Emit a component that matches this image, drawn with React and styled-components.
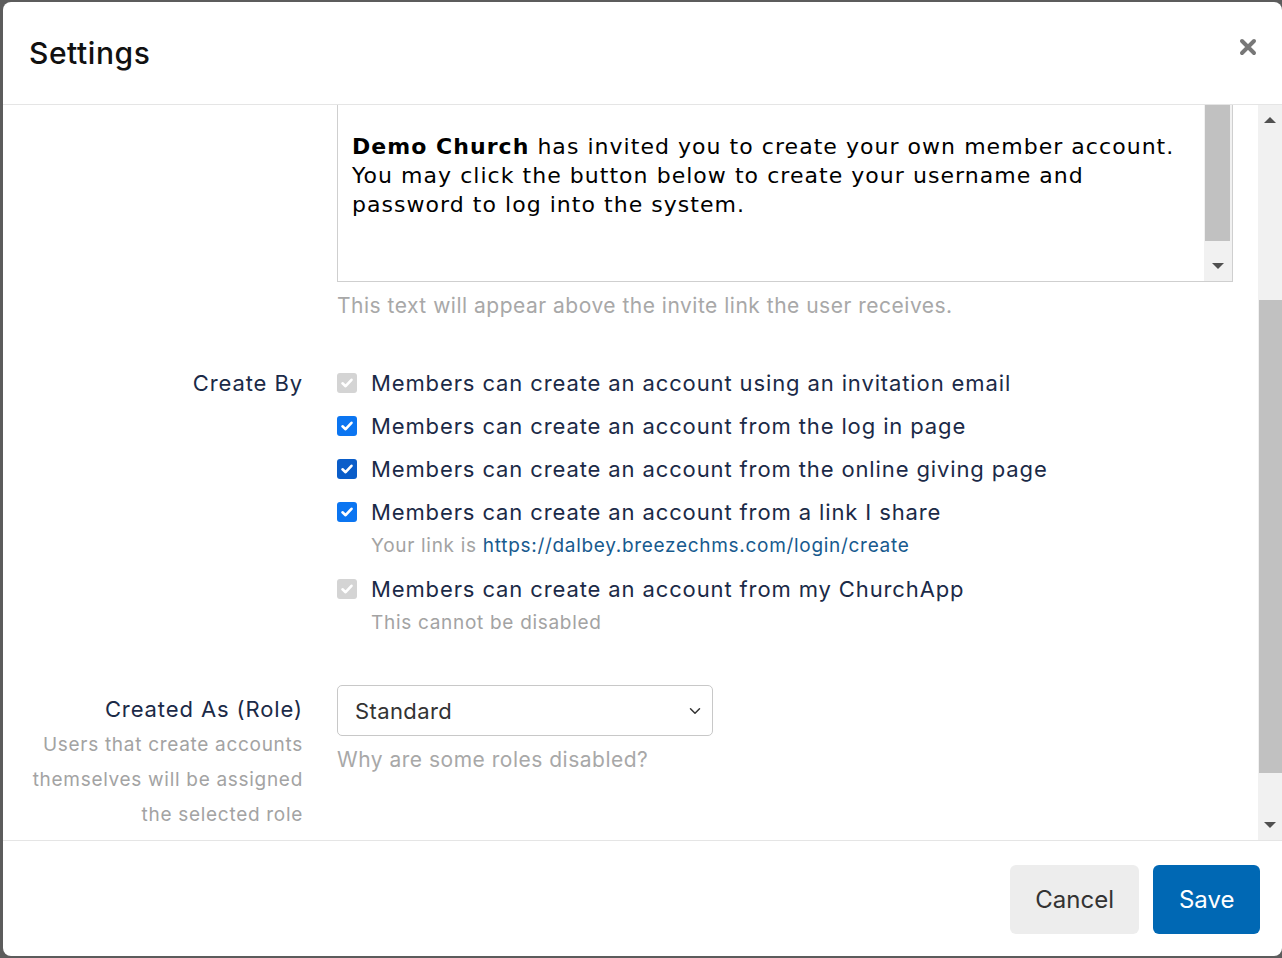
import React from "react";
import styled, { createGlobalStyle } from "styled-components";
import { ChevronDown } from "lucide-react";

const Global = createGlobalStyle`
  html, body { margin: 0; padding: 0; }
  body {
    background: #5c5c5c;
    width: 1282px;
    height: 958px;
    overflow: hidden;
    font-family: Inter, "Noto Sans", sans-serif;
  }
`;

const Page = styled.div`
  padding: 2px 0 0 3px;
`;

const Modal = styled.div`
  width: 1279px;
  height: 954px;
  background: #fff;
  border-radius: 8px;
  overflow: hidden;
  display: flex;
  flex-direction: column;
`;

const Header = styled.div`
  height: 102px;
  flex: none;
  display: flex;
  align-items: center;
  justify-content: space-between;
  padding: 0 25px 0 26px;
  border-bottom: 1px solid #e5e5e5;
`;

const Title = styled.h1`
  margin: 0;
  font-size: 30px;
  font-weight: 500;
  color: #111;
  letter-spacing: 0.55px;
`;

const Close = styled.button`
  align-self: flex-start;
  margin-top: 36px;
  width: 18px;
  height: 18px;
  padding: 0;
  border: 0;
  background: none;
  display: flex;
`;

const Body = styled.div`
  flex: 1;
  min-height: 0;
  display: flex;
`;

const Content = styled.div`
  flex: 1;
  min-width: 0;
  overflow: hidden;
  padding-right: 25px;
`;

const Track = styled.div`
  width: ${(p) => p.$w}px;
  flex: none;
  background: #f1f1f1;
  display: flex;
  flex-direction: column;
`;

const Thumb = styled.div`
  height: ${(p) => p.$h}px;
  margin: ${(p) => p.$m};
  background: #c1c1c1;
  flex: none;
`;

const Spacer = styled.div`
  flex: ${(p) => (p.$h ? "none" : "1")};
  height: ${(p) => (p.$h ? `${p.$h}px` : "auto")};
`;

const Arrow = styled.div`
  height: 30px;
  flex: none;
  display: flex;
  align-items: center;
  justify-content: center;
  &::after {
    content: "";
    width: 0;
    height: 0;
    border-left: 6px solid transparent;
    border-right: 6px solid transparent;
    ${(p) =>
      p.$up
        ? "border-bottom: 6px solid #505050;"
        : "border-top: 6px solid #505050;"}
  }
`;

const Group = styled.div`
  display: grid;
  grid-template-columns: 299px 1fr;
  column-gap: 35px;
  margin-bottom: 47px;
`;

const LabelCol = styled.div`
  text-align: right;
  padding-top: ${(p) => p.$pt || 0}px;
  padding-right: 0;
`;

const Label = styled.div`
  font-size: 22px;
  line-height: 30px;
  letter-spacing: 0.9px;
  color: #1b2a47;
  margin-right: -1px;
`;

const LabelHint = styled.div`
  margin-top: 3px;
  margin-right: -1px;
  font-size: 19px;
  line-height: 35px;
  letter-spacing: 0.7px;
  color: #a3a3a3;
`;

const Editor = styled.div`
  height: 176px;
  border: 1px solid #cfcfcf;
  border-top: 0;
  display: flex;
`;

const EditorText = styled.div`
  flex: 1;
  padding: 27px 13px 0 14px;
  font-family: Verdana, "DejaVu Sans", sans-serif;
  font-size: 22px;
  line-height: 29px;
  letter-spacing: 1.04px;
  color: #000;
  white-space: nowrap;
  overflow: hidden;
  b { font-weight: bold; }
`;

const Help = styled.div`
  margin-top: 9px;
  font-size: 21px;
  line-height: 30px;
  letter-spacing: 0.5px;
  color: #a8a8a8;
`;

const Options = styled.div`
  display: flex;
  flex-direction: column;
  gap: 13px;
`;

const Option = styled.div`
  display: flex;
  flex-direction: column;
`;

const OptionRow = styled.label`
  display: flex;
  align-items: center;
  gap: 14px;
  height: 30px;
  font-size: 22px;
  letter-spacing: 0.88px;
  color: #1b2a47;
`;

const Box = styled.span`
  width: 20px;
  height: 20px;
  border-radius: 3px;
  flex: none;
  display: flex;
  align-items: center;
  justify-content: center;
  background: ${(p) =>
    p.$state === "disabled"
      ? "#d4d4d4"
      : p.$state === "active"
      ? "#0a5dc9"
      : "#0b75f1"};
`;

const Sub = styled.div`
  margin-top: 4px;
  padding-left: 34px;
  font-size: 19px;
  line-height: 30px;
  letter-spacing: 0.7px;
  color: #a3a3a3;
`;

const Link = styled.a`
  color: #175a8e;
  text-decoration: none;
`;

const Select = styled.div`
  width: 376px;
  height: 51px;
  box-sizing: border-box;
  border: 1px solid #c8c8c8;
  border-radius: 5px;
  display: flex;
  align-items: center;
  justify-content: space-between;
  padding: 0 8px 0 17px;
  font-size: 22px;
  letter-spacing: 0.4px;
  color: #333;
`;

const Footer = styled.div`
  flex: none;
  border-top: 1px solid #e5e5e5;
  padding: 24px 22px 22px;
  display: flex;
  justify-content: flex-end;
  gap: 14px;
`;

const Button = styled.button`
  height: 69px;
  padding: 0 25.5px;
  border: 0;
  border-radius: 6px;
  font-family: Inter, "Noto Sans", sans-serif;
  font-size: 24px;
  background: ${(p) => (p.$primary ? "#0068b4" : "#ededed")};
  color: ${(p) => (p.$primary ? "#fff" : "#333")};
`;

const Check = ({ state }) => (
  <Box $state={state}>
    <svg width="14" height="14" viewBox="0 0 14 14">
      <path
        d="M2.5 7.3 L5.6 10.2 L11.5 3.8"
        fill="none"
        stroke="#fff"
        strokeWidth="2.6"
        strokeLinecap="round"
        strokeLinejoin="round"
      />
    </svg>
  </Box>
);

const options = [
  { text: "Members can create an account using an invitation email", state: "disabled" },
  { text: "Members can create an account from the log in page", state: "checked" },
  { text: "Members can create an account from the online giving page", state: "active" },
  {
    text: "Members can create an account from a link I share",
    state: "checked",
    sub: (
      <>
        Your link is <Link>https://dalbey.breezechms.com/login/create</Link>
      </>
    ),
  },
  {
    text: "Members can create an account from my ChurchApp",
    state: "disabled",
    sub: "This cannot be disabled",
  },
];

export default function App() {
  return (
    <>
      <Global />
      <Page>
        <Modal>
          <Header>
            <Title>Settings</Title>
            <Close aria-label="Close">
              <svg width="18" height="18" viewBox="0 0 18 18">
                <path
                  d="M3 3 L15 15 M15 3 L3 15"
                  stroke="#777"
                  strokeWidth="4"
                  strokeLinecap="round"
                />
              </svg>
            </Close>
          </Header>
          <Body>
            <Content>
              <Group>
                <LabelCol />
                <div>
                  <Editor>
                    <EditorText>
                      <b>Demo Church</b> has invited you to create your own member account.
                      <br />
                      You may click the button below to create your username and
                      <br />
                      password to log into the system.
                    </EditorText>
                    <Track $w={28}>
                      <Thumb $h={136} $m="0 2px 0 1px" />
                      <Spacer />
                      <Arrow />
                    </Track>
                  </Editor>
                  <Help>This text will appear above the invite link the user receives.</Help>
                </div>
              </Group>
              <Group>
                <LabelCol>
                  <Label>Create By</Label>
                </LabelCol>
                <Options>
                  {options.map((o) => (
                    <Option key={o.text}>
                      <OptionRow>
                        <Check state={o.state} />
                        {o.text}
                      </OptionRow>
                      {o.sub && <Sub>{o.sub}</Sub>}
                    </Option>
                  ))}
                </Options>
              </Group>
              <Group>
                <LabelCol $pt={9}>
                  <Label>Created As (Role)</Label>
                  <LabelHint>
                    Users that create accounts
                    <br />
                    themselves will be assigned
                    <br />
                    the selected role
                  </LabelHint>
                </LabelCol>
                <div>
                  <Select>
                    Standard
                    <ChevronDown size={18} color="#333" strokeWidth={2} />
                  </Select>
                  <Help>Why are some roles disabled?</Help>
                </div>
              </Group>
            </Content>
            <Track $w={24}>
              <Arrow $up />
              <Spacer $h={165} />
              <Thumb $h={473} $m="0 0 0 1px" />
              <Spacer />
              <Arrow />
            </Track>
          </Body>
          <Footer>
            <Button>Cancel</Button>
            <Button $primary>Save</Button>
          </Footer>
        </Modal>
      </Page>
    </>
  );
}
